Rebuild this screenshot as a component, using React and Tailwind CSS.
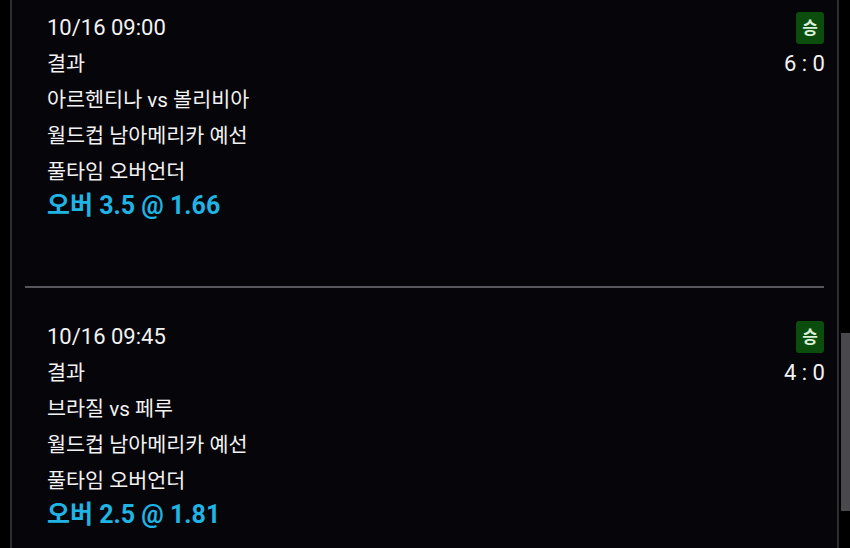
import React from 'react';

const BETS = [
  {
    time: '10/16 09:00',
    score: '6 : 0',
    match: '아르헨티나 vs 볼리비아',
    league: '월드컵 남아메리카 예선',
    market: '풀타임 오버언더',
    pick: '오버 3.5 @ 1.66',
  },
  {
    time: '10/16 09:45',
    score: '4 : 0',
    match: '브라질 vs 페루',
    league: '월드컵 남아메리카 예선',
    market: '풀타임 오버언더',
    pick: '오버 2.5 @ 1.81',
  },
];

const BetCard = ({ bet }) => (
  <div className="pl-[22px] pt-[31px] pb-[60px] text-[20.7px] leading-[36px] text-[#f2f2f2]">
    <div className="flex items-center justify-between">
      <span className="text-[22px]">{bet.time}</span>
      <span className="flex h-[32px] w-[28px] items-center justify-center rounded-[3px] bg-[#0a4d0c] text-[17px] font-bold text-[#d8f0d8]">
        승
      </span>
    </div>
    <div className="flex items-center justify-between">
      <span>결과</span>
      <span className="mr-[-1px] text-[22px]">{bet.score}</span>
    </div>
    <div>{bet.match}</div>
    <div>{bet.league}</div>
    <div>{bet.market}</div>
    <div className="-mt-[2px] mb-[2px] text-[25px] font-bold text-[#1fb4e4]">{bet.pick}</div>
  </div>
);

export default function App() {
  return (
    <div
      className="flex h-[548px] w-[850px] overflow-hidden bg-black"
      style={{ fontFamily: "Roboto, 'Noto Sans CJK KR', sans-serif" }}
    >
      <div className="ml-[10px] w-[829px] border-x-2 border-x-[#2e2e30] bg-[#060509]">
        <div className="-mt-[21px] pl-[13px] pr-[13px]">
          {BETS.map((bet, i) => (
            <div key={bet.time} className={i > 0 ? 'border-t-2 border-[#56565c]' : ''}>
              <BetCard bet={bet} />
            </div>
          ))}
        </div>
      </div>
      <div className="ml-[2px] flex-1 pt-[333px]">
        <div className="h-[178px] w-full bg-[#48484d]" />
      </div>
    </div>
  );
}
